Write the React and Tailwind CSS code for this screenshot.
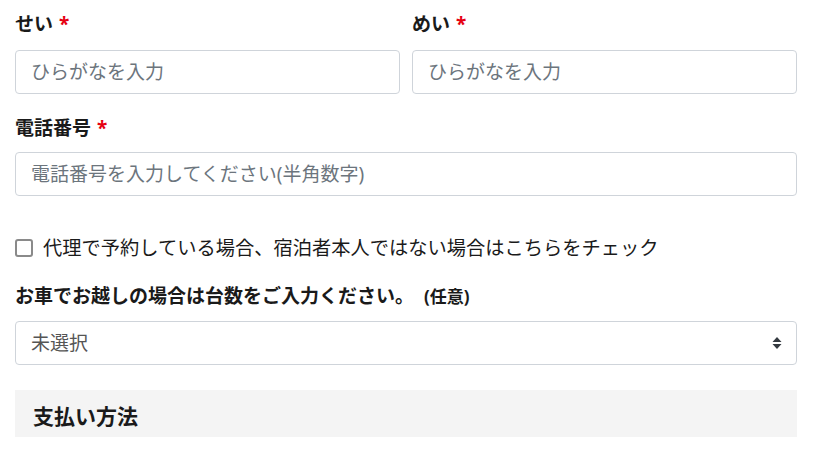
import { useState } from 'react';

const font = "font-['Noto_Sans','Noto_Sans_CJK_JP',sans-serif]";

function Label({ children, required }) {
  return (
    <label className="block text-[19px] font-bold leading-[26px] text-[#1a1a1a]">
      {children}
      {required && <span className="ml-[6px] text-[#e60012]">*</span>}
    </label>
  );
}

function TextInput({ placeholder }) {
  return (
    <input
      type="text"
      placeholder={placeholder}
      className="h-[44px] w-full rounded-[4px] border border-[#cfd4da] bg-white px-[15px] text-[19px] text-[#333] placeholder:text-[#6c757d] outline-none"
    />
  );
}

export default function App() {
  const [proxy, setProxy] = useState(false);

  return (
    <div className={`${font} min-h-screen bg-white pl-[15px] pr-[30px] pt-[11px] text-[#1a1a1a]`}>
      <div className="grid grid-cols-2 gap-x-[12px]">
        <div>
          <Label required>せい</Label>
          <div className="mt-[13px]">
            <TextInput placeholder="ひらがなを入力" />
          </div>
        </div>
        <div>
          <Label required>めい</Label>
          <div className="mt-[13px]">
            <TextInput placeholder="ひらがなを入力" />
          </div>
        </div>
      </div>

      <div className="mt-[21px]">
        <Label required>電話番号</Label>
        <div className="mt-[11px]">
          <TextInput placeholder="電話番号を入力してください(半角数字)" />
        </div>
      </div>

      <label className="mt-[39px] flex items-center gap-[10px] text-[19.25px] leading-[26px] text-[#1a1a1a]">
        <span
          onClick={() => setProxy(!proxy)}
          className="flex h-[18px] w-[18px] shrink-0 items-center justify-center rounded-[3px] border-2 border-[#8a8a8a] bg-white"
        >
          {proxy && <span className="h-[8px] w-[8px] bg-[#8a8a8a]" />}
        </span>
        代理で予約している場合、宿泊者本人ではない場合はこちらをチェック
      </label>

      <div className="mt-[22px]">
        <label className="block text-[19px] font-bold leading-[26px] text-[#1a1a1a]">
          お車でお越しの場合は台数をご入力ください。
          <span className="ml-[10px] text-[17px]">(任意)</span>
        </label>
        <div className="relative mt-[11px]">
          <select className="h-[44px] w-full appearance-none rounded-[4px] border border-[#cfd4da] bg-white px-[15px] text-[19px] text-[#555] outline-none">
            <option>未選択</option>
            <option>1台</option>
            <option>2台</option>
            <option>3台</option>
          </select>
          <svg
            className="pointer-events-none absolute right-[15px] top-[15px]"
            width="10"
            height="14"
            viewBox="0 0 10 14"
          >
            <path d="M5 1 L9.5 6 H0.5 Z" fill="#343a40" />
            <path d="M5 13 L9.5 8 H0.5 Z" fill="#343a40" />
          </svg>
        </div>
      </div>

      <div className="mt-[25px] flex h-[47px] items-center bg-[#f4f4f4] px-[18px] pt-[6px]">
        <h2 className="text-[21px] font-bold leading-none text-[#1a1a1a]">支払い方法</h2>
      </div>
    </div>
  );
}
